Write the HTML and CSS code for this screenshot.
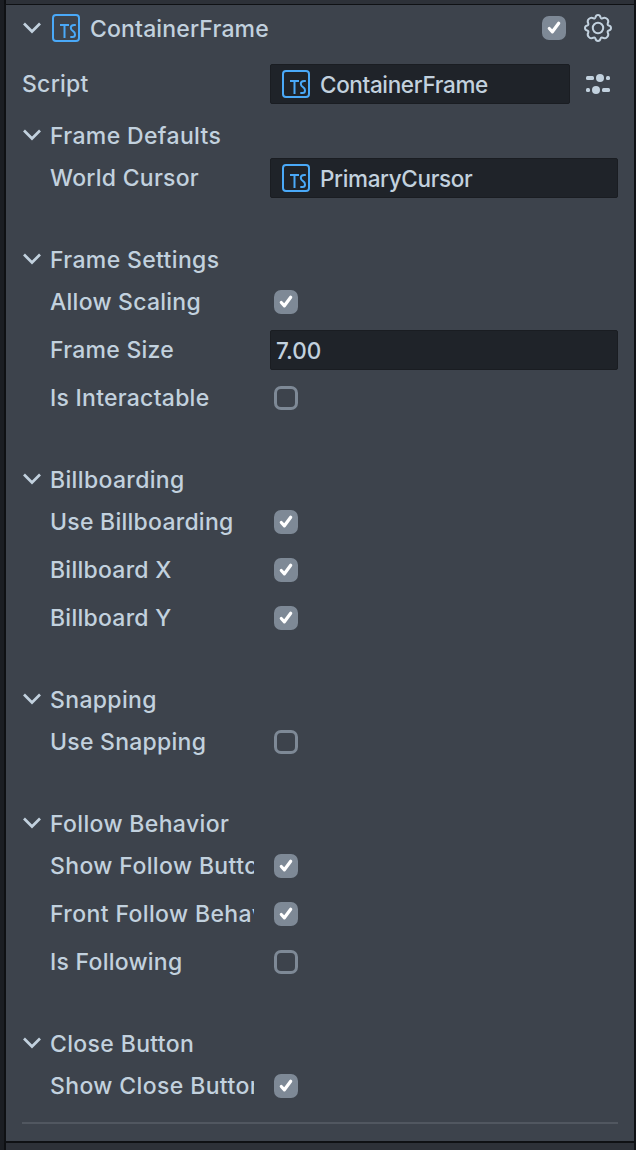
FILE: index.html
```
<!DOCTYPE html>
<html lang="en">
<head>
<meta charset="utf-8">
<title>Inspector</title>
<link rel="stylesheet" href="styles.css">
</head>
<body>
<svg class="defs" width="0" height="0">
  <symbol id="chevron" viewBox="0 0 20 14"><path d="M2 2.5 10 10.5 18 2.5" fill="none" stroke="currentColor" stroke-width="2.7"/></symbol>
  <symbol id="script" viewBox="0 0 28 28"><g fill="none" stroke="currentColor" stroke-width="2"><rect x="1" y="1" width="26" height="26" rx="3"/><path d="M8 11H17M12.5 11V24M23.8 11H22.2Q18.8 11 18.8 13.8Q18.8 16 21 17.2Q23 18.4 23 20.5Q23 23 20.5 23H18.3"/></g></symbol>
  <symbol id="check" viewBox="0 0 24 24"><path d="M7.3 12.5 10.4 15.8 16.7 7.2" fill="none" stroke="#fff" stroke-width="3.2" stroke-linecap="round" stroke-linejoin="round"/></symbol>
</svg>
<main class="panel">
  <header class="header">
    <svg class="chevron"><use href="#chevron"/></svg>
    <svg class="script-icon"><use href="#script"/></svg>
    <span class="title">ContainerFrame</span>
    <span class="box on"><svg><use href="#check"/></svg></span>
    <svg class="gear" viewBox="0 0 28 28" fill="none" stroke="currentColor" stroke-width="2" stroke-linejoin="round"><circle cx="14" cy="14" r="5.2"/><path d="M11.5 3.2Q12 1 14 1Q16 1 16.5 3.2Q17 4.8 18.5 4.3Q21 2.8 23.1 4.9Q25.2 7 23.7 9.5Q23.2 11 24.8 11.5Q27 12 27 14Q27 16 24.8 16.5Q23.2 17 23.7 18.5Q25.2 21 23.1 23.1Q21 25.2 18.5 23.7Q17 23.2 16.5 24.8Q16 27 14 27Q12 27 11.5 24.8Q11 23.2 9.5 23.7Q7 25.2 4.9 23.1Q2.8 21 4.3 18.5Q4.8 17 3.2 16.5Q1 16 1 14Q1 12 3.2 11.5Q4.8 11 4.3 9.5Q2.8 7 4.9 4.9Q7 2.8 9.5 4.3Q11 4.8 11.5 3.2Z"/></svg>
  </header>
  <div class="row script-row">
    <span class="label">Script</span>
    <div class="field"><svg class="script-icon"><use href="#script"/></svg><span>ContainerFrame</span></div>
    <svg class="sliders" viewBox="0 0 24 20" fill="currentColor"><rect y="2" width="8" height="4" rx="1.5"/><circle cx="14" cy="4" r="4"/><rect x="20" y="2" width="4" height="4" rx="1.5"/><rect y="14" width="4" height="4" rx="1.5"/><circle cx="10" cy="16" r="4"/><rect x="16" y="14" width="8" height="4" rx="1.5"/></svg>
  </div>

  <section class="group">
    <h2 class="heading"><svg class="chevron"><use href="#chevron"/></svg>Frame Defaults</h2>
    <div class="row"><span class="label">World Cursor</span><div class="field"><svg class="script-icon"><use href="#script"/></svg><span>PrimaryCursor</span></div></div>
  </section>
  <section class="group">
    <h2 class="heading"><svg class="chevron"><use href="#chevron"/></svg>Frame Settings</h2>
    <div class="row"><span class="label">Allow Scaling</span><span class="box on"><svg><use href="#check"/></svg></span></div>
    <div class="row"><span class="label">Frame Size</span><div class="field number">7.00</div></div>
    <div class="row"><span class="label">Is Interactable</span><span class="box"></span></div>
  </section>
  <section class="group">
    <h2 class="heading"><svg class="chevron"><use href="#chevron"/></svg>Billboarding</h2>
    <div class="row"><span class="label">Use Billboarding</span><span class="box on"><svg><use href="#check"/></svg></span></div>
    <div class="row"><span class="label">Billboard X</span><span class="box on"><svg><use href="#check"/></svg></span></div>
    <div class="row"><span class="label">Billboard Y</span><span class="box on"><svg><use href="#check"/></svg></span></div>
  </section>
  <section class="group">
    <h2 class="heading"><svg class="chevron"><use href="#chevron"/></svg>Snapping</h2>
    <div class="row"><span class="label">Use Snapping</span><span class="box"></span></div>
  </section>
  <section class="group">
    <h2 class="heading"><svg class="chevron"><use href="#chevron"/></svg>Follow Behavior</h2>
    <div class="row"><span class="label long">Show Follow Button</span><span class="box on"><svg><use href="#check"/></svg></span></div>
    <div class="row"><span class="label long">Front Follow Behavior</span><span class="box on"><svg><use href="#check"/></svg></span></div>
    <div class="row"><span class="label">Is Following</span><span class="box"></span></div>
  </section>
  <section class="group">
    <h2 class="heading"><svg class="chevron"><use href="#chevron"/></svg>Close Button</h2>
    <div class="row"><span class="label long">Show Close Button</span><span class="box on"><svg><use href="#check"/></svg></span></div>
  </section>
  <hr class="divider">
</main>
</body>
</html>
```
FILE: styles.css
```
* { box-sizing: border-box; }
body {
  margin: 0;
  height: 1150px;
  padding: 4px 1px 0 4px;
  overflow: hidden;
  background: linear-gradient(90deg, #1b1e23 4px, #0d0f12 4px, #0d0f12 6px, #2d3138 6px, #2d3138 634px, #101216 634px);
  font: 500 23px/28px Inter, "Liberation Sans", sans-serif;
  letter-spacing: 0.25px;
  color: #c2d1de;
}
.defs { position: absolute; }
.panel {
  display: flex;
  flex-direction: column;
  height: 1139px;
  padding: 0 16px;
  background: #3d434c;
  border: 2px solid #0f1114;
  border-top-width: 1px;
  border-right-width: 1px;
}
svg { display: block; flex: none; }
.header { display: flex; align-items: center; height: 46px; }
.chevron { width: 20px; height: 14px; }
.header .script-icon { margin: 0 10px; }
.script-icon { width: 28px; height: 28px; color: #4aa9f8; }
.title { flex: 1; padding-top: 1px; letter-spacing: 0.15px; }
.gear { width: 28px; height: 28px; margin: 0 6px 0 18px; }
.row { display: flex; align-items: center; height: 48px; padding-left: 28px; }
.label { width: 204px; margin-right: 16px; overflow: hidden; white-space: nowrap; flex: none; }
.label.long { letter-spacing: 0.38px; }
.script-row { height: 66px; padding-left: 0; }
.script-row .label { width: 232px; }
.field {
  display: flex;
  align-items: center;
  flex: 1;
  height: 40px;
  padding: 2px 12px 0;
  gap: 10px;
  background: #1f2329;
  border: 1px solid #1a1d22;
  border-radius: 2px;
  font-size: 22.5px;
  letter-spacing: -0.36px;
}
.field .script-icon { margin: -2px 0 0 -1px; }
.number { padding-left: 5px; letter-spacing: 0; }
.sliders { width: 24px; height: 20px; margin: 0 8px 0 16px; }
.group { margin-bottom: 39px; }
.heading { display: flex; align-items: center; gap: 8px; height: 38px; margin: 0 0 -1px; font: inherit; letter-spacing: 0.35px; }
.heading .chevron { margin-top: -2px; }
.box { width: 24px; height: 24px; border: 3px solid #7e8996; border-radius: 7px; flex: none; }
.row .box { margin-left: 4px; }
.on { background: #7e8996; }
.on svg { width: 24px; height: 24px; margin: -3px; }
.divider { width: 100%; height: 2px; margin: -27px 0 0; border: 0; background: #515760; }
```
